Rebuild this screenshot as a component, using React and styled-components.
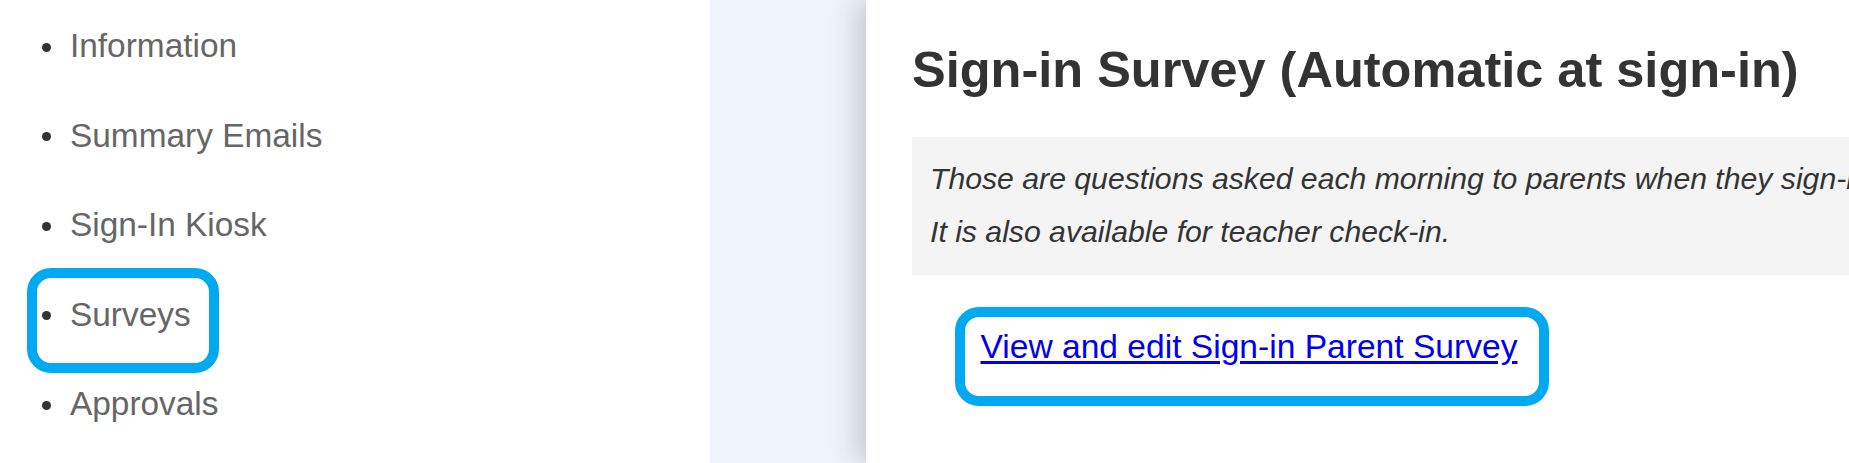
import React from "react";
import styled, { createGlobalStyle } from "styled-components";

const GlobalStyle = createGlobalStyle`
  html, body {
    margin: 0;
    padding: 0;
    height: 100%;
    overflow: hidden;
    font-family: "Liberation Sans", Arial, sans-serif;
  }
`;

const Page = styled.div`
  display: flex;
  height: 100vh;
  background: #eff3fa;
`;

const Sidebar = styled.nav`
  width: 710px;
  flex-shrink: 0;
  background: #ffffff;
`;

const NavList = styled.ul`
  list-style: none;
  margin: 0;
  padding: 1px 0 0 42px;
`;

const NavItem = styled.li`
  position: relative;
  display: flex;
  align-items: center;
  height: 89.5px;
  line-height: 89.5px;
  font-size: 33.4px;
  color: #666666;
`;

const Dot = styled.span`
  width: 9px;
  height: 9px;
  margin: 3px 19px 0 0;
  border-radius: 50%;
  background: #333333;
  flex-shrink: 0;
`;

const Callout = styled.span`
  position: absolute;
  top: ${(p) => p.$top}px;
  left: ${(p) => p.$left}px;
  width: ${(p) => p.$width}px;
  height: ${(p) => p.$height}px;
  box-sizing: border-box;
  border: 10px solid #00a9f0;
  border-radius: 24px;
  pointer-events: none;
`;

const Main = styled.main`
  flex: 1;
  min-width: 0;
  margin-left: 156px;
  padding: 0 0 0 46px;
  background: #ffffff;
  box-shadow: -8px 0 26px rgba(40, 48, 70, 0.22);
  overflow: hidden;
`;

const Title = styled.h1`
  margin: 40.5px 0 0;
  font-size: 50.5px;
  line-height: 58px;
  font-weight: 700;
  color: #333333;
  white-space: nowrap;
`;

const Note = styled.div`
  margin-top: 38.5px;
  padding: 15px 18px 17px;
  background: #f4f4f4;
  font-size: 30.2px;
  line-height: 53px;
  font-style: italic;
  color: #333333;
  white-space: nowrap;
`;

const LinkRow = styled.div`
  position: relative;
  margin-top: 52.4px;
  padding-left: 68.5px;
  font-size: 33.6px;
  line-height: 40px;
`;

const SurveyLink = styled.a`
  color: #0000ee;
  text-decoration: underline;
  text-underline-offset: 3px;
`;

const navItems = ["Information", "Summary Emails", "Sign-In Kiosk", "Surveys", "Approvals"];

export default function App() {
  return (
    <>
      <GlobalStyle />
      <Page>
        <Sidebar>
          <NavList>
            {navItems.map((item) => (
              <NavItem key={item}>
                <Dot />
                {item}
                {item === "Surveys" && (
                  <Callout $top={-1.5} $left={-15} $width={192} $height={105} />
                )}
              </NavItem>
            ))}
          </NavList>
        </Sidebar>
        <Main>
          <Title>Sign-in Survey (Automatic at sign-in)</Title>
          <Note>
            Those are questions asked each morning to parents when they sign-in.
            <br />
            It is also available for teacher check-in.
          </Note>
          <LinkRow>
            <SurveyLink href="#">View and edit Sign-in Parent Survey</SurveyLink>
            <Callout $top={-20.4} $left={43} $width={594} $height={99} />
          </LinkRow>
        </Main>
      </Page>
    </>
  );
}
